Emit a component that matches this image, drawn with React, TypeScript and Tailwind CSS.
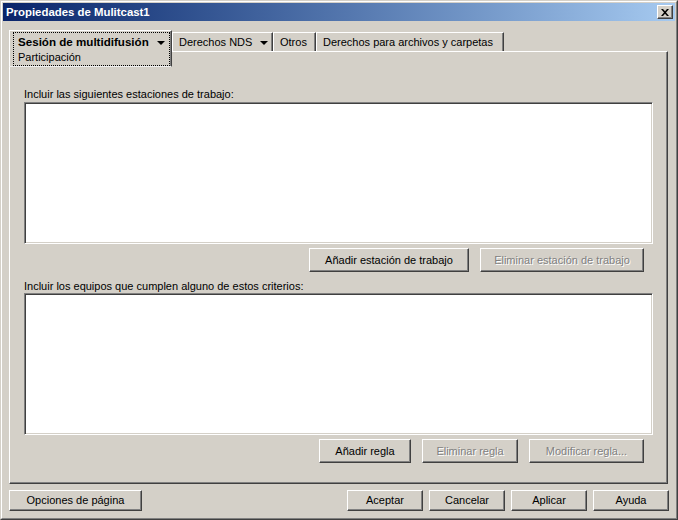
import React from "react";

const btn =
  "h-full flex items-center justify-center bg-[#d4d0c8] border border-t-white border-l-white border-r-[#404040] border-b-[#404040] shadow-[inset_-1px_-1px_0_#808080]";

function Btn({ w, children, disabled }: { w: string; children: React.ReactNode; disabled?: boolean }) {
  return (
    <div className={`${btn} ${w}`}>
      <span className={disabled ? "text-[#808080] [text-shadow:1px_1px_0_#ffffff]" : "text-black"}>{children}</span>
    </div>
  );
}

function Arrow() {
  return <span className="inline-block w-0 h-0 border-l-[4px] border-r-[4px] border-t-[4px] border-l-transparent border-r-transparent border-t-black" />;
}

const listbox =
  "w-[629px] h-[142px] bg-white border border-t-[#808080] border-l-[#808080] border-r-white border-b-white shadow-[inset_1px_1px_0_#404040,inset_-1px_-1px_0_#d4d0c8]";

const tab =
  "h-[19px] mt-[2px] flex items-center pl-[6px] bg-[#d4d0c8] border-t border-l border-t-white border-l-white border-r border-r-[#404040] shadow-[inset_-1px_0_0_#808080]";

export default function App() {
  return (
    <div className="w-[678px] h-[520px] bg-[#d4d0c8] border border-t-[#d4d0c8] border-l-[#d4d0c8] border-r-[#404040] border-b-[#404040] font-['Liberation_Sans',Arial,sans-serif] text-[11px] leading-[13px] text-black">
      <div className="h-full border border-t-white border-l-white border-r-[#808080] border-b-[#808080] p-px flex flex-col">
        {/* title bar */}
        <div className="h-[18px] flex items-center bg-linear-to-r from-[#0a246a] to-[#a6caf0] pl-[3px] pr-[2px] shrink-0">
          <span className="font-bold text-white text-[11.4px]">Propiedades de Mulitcast1</span>
          <div className="ml-auto w-4 h-[14px] flex items-center justify-center bg-[#d4d0c8] border border-t-white border-l-white border-r-[#404040] border-b-[#404040] shadow-[inset_-1px_-1px_0_#808080]">
            <svg width="8" height="7" viewBox="0 0 8 7">
              <path d="M0 0h2l2 2.2L6 0h2L5 3.5 8 7H6L4 4.8 2 7H0l3-3.5z" fill="#000" />
            </svg>
          </div>
        </div>

        {/* tab row */}
        <div className="relative z-10 flex items-start ml-[6px] mt-[9px] h-[21px] shrink-0">
          <div className="w-[163px] h-[37px] bg-[#d4d0c8] border-t border-l border-t-white border-l-white border-r border-r-[#404040] border-b border-b-[#f0f0f0] shadow-[inset_-1px_0_0_#808080] pt-[1px] pl-[3px] pr-[1px]">
            <div className="h-[34px] border border-dotted border-black pl-[4px] pt-[2px]">
              <div className="flex items-center leading-[14px]">
                <span className="font-bold text-[11.6px]">Sesión de multidifusión</span>
                <span className="ml-[8px] mt-[1px] flex"><Arrow /></span>
              </div>
              <div className="leading-[14px] mt-[1px]">Participación</div>
            </div>
          </div>
          <div className={`${tab} w-[101px]`}>
            <span>Derechos NDS</span>
            <span className="ml-[8px] mt-[1px] flex"><Arrow /></span>
          </div>
          <div className={`${tab} w-[43px]`}>
            <span>Otros</span>
          </div>
          <div className={`${tab} w-[188px]`}>
            <span>Derechos para archivos y carpetas</span>
          </div>
        </div>

        {/* panel */}
        <div className="ml-[6px] mr-[7px] h-[433px] shrink-0 border border-t-white border-l-white border-r-[#404040] border-b-[#404040] shadow-[inset_-1px_-1px_0_#808080] pl-[14px] pt-[36px]">
          <div>Incluir las siguientes estaciones de trabajo:</div>
          <div className={`${listbox} mt-px`} />
          <div className="w-[629px] h-[24px] mt-[4px] flex justify-end gap-[11px] pr-[9px]">
            <Btn w="w-[160px]">Añadir estación de trabajo</Btn>
            <Btn w="w-[164px]" disabled>Eliminar estación de trabajo</Btn>
          </div>
          <div className="mt-[8px]">Incluir los equipos que cumplen alguno de estos criterios:</div>
          <div className={listbox} />
          <div className="w-[629px] h-[24px] mt-[4px] flex justify-end gap-[11px] pr-[9px]">
            <Btn w="w-[92px]">Añadir regla</Btn>
            <Btn w="w-[96px]" disabled>Eliminar regla</Btn>
            <Btn w="w-[115px]" disabled>Modificar regla...</Btn>
          </div>
        </div>

        {/* bottom buttons */}
        <div className="ml-[6px] mr-[6px] mt-[6px] h-[21px] flex shrink-0">
          <Btn w="w-[133px]">Opciones de página</Btn>
          <div className="ml-auto flex gap-[6px] h-full">
            <Btn w="w-[76px]">Aceptar</Btn>
            <Btn w="w-[76px]">Cancelar</Btn>
            <Btn w="w-[76px]">Aplicar</Btn>
            <Btn w="w-[76px]">Ayuda</Btn>
          </div>
        </div>
      </div>
    </div>
  );
}
